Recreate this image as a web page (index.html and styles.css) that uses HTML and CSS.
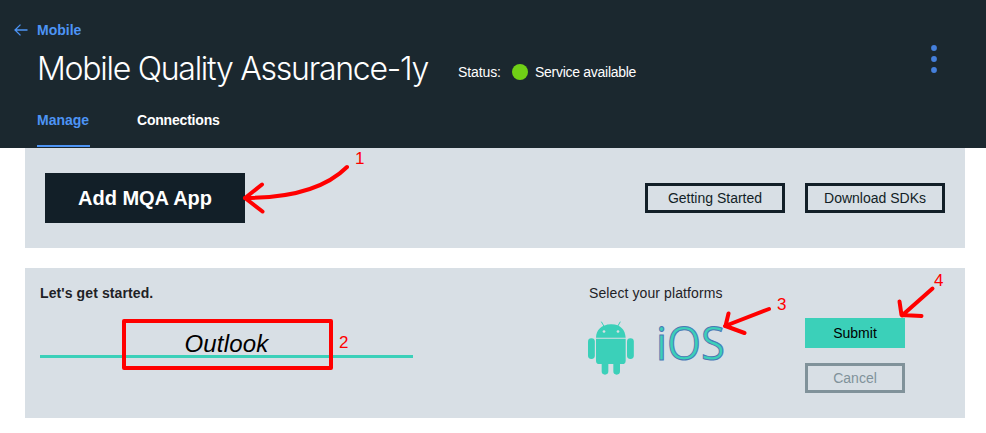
FILE: index.html
```html
<!DOCTYPE html>
<html lang="en">
<head>
<meta charset="utf-8">
<title>Mobile Quality Assurance-1y</title>
<link rel="stylesheet" href="styles.css">
</head>
<body>
<header class="header">
  <a class="back"><svg class="back-icon" width="14" height="12" viewBox="0 0 14 12"><path d="M6.500.6 1 6l5.500 5.400M1 6h12.500"/></svg><span class="back-label">Mobile</span></a>
  <div class="title-row">
    <h1 class="title">Mobile Quality Assurance-1y</h1>
    <span class="status-label">Status:</span>
    <span class="status-dot"></span>
    <span class="status-text">Service available</span>
    <svg class="kebab" width="6" height="30" viewBox="0 0 6 30"><circle cx="3" cy="4" r="2.900"/><circle cx="3" cy="15" r="2.900"/><circle cx="3" cy="26" r="2.900"/></svg>
  </div>
  <nav class="tabs">
    <a class="tab tab-active">Manage</a>
    <a class="tab tab-connections">Connections</a>
  </nav>
</header>
<main class="content">
  <section class="panel toolbar">
    <button class="button add">Add MQA App</button>
    <button class="button outline">Getting Started</button>
    <button class="button outline sdk">Download SDKs</button>
  </section>
  <section class="panel form">
    <div class="name-col">
      <h2 class="form-title"><span>Let's get started.</span></h2>
      <div class="name-field">Outlook</div>
    </div>
    <div class="platforms">
      <p class="platform-title">Select your platforms</p>
      <div class="platform-icons">
        <svg class="android" width="46" height="54" viewBox="54 138 138 162">
          <path d="M78 188C79 165 94 149 122.500 148S166 165 167 188ZM78 191.500H167V257Q167 267 157 267H150V289A10 10 0 0 1 130 289V267H115V289A10 10 0 0 1 95 289V267H88Q78 267 78 257Z"/>
          <rect x="54" y="190" width="20.500" height="62" rx="10.200"/><rect x="171" y="190" width="20.500" height="62" rx="10.200"/>
          <path class="antenna" d="m94 140 8 14m49-14-8 14"/>
          <circle class="eye" cx="102" cy="169.500" r="4"/><circle class="eye" cx="144" cy="169.500" r="4"/>
        </svg>
        <svg class="ios" width="70" height="54" viewBox="0 0 70 54"><text x="0" y="38.500" textLength="69" lengthAdjust="spacingAndGlyphs">iOS</text></svg>
      </div>
    </div>
    <div class="actions">
      <button class="button submit">Submit</button>
      <button class="button cancel">Cancel</button>
    </div>
  </section>
</main>
<svg class="annotations" width="986" height="433" viewBox="0 0 986 433">
  <g class="marks">
    <path d="M347 167Q316 198 245 198"/><path d="M262 184.500 245 198 262.500 211.500"/>
    <path d="M769 309 725 326M728.500 313.500 725.500 326 744.500 333"/>
    <path d="M932.500 288.500 902 315.500M899.500 301.500 901.500 315 921.500 316"/>
    <rect x="124" y="321" width="207" height="47"/>
  </g>
  <g class="numbers"><text x="355" y="164">1</text><text x="339" y="348">2</text><text x="777" y="310">3</text><text x="934" y="286">4</text></g>
</svg>
</body>
</html>
```
FILE: styles.css
```css
* { box-sizing: border-box; }
body {
  margin: 0;
  background: #fff;
  color: #1f2226;
  font: 14px/18px "Liberation Sans", Arial, sans-serif;
}
h1, h2, p { margin: 0; }
.header {
  display: flex;
  flex-direction: column;
  height: 148px;
  padding: 19px 49px 0 14px;
  background: #1b282f;
}
.back { display: flex; align-items: center; height: 21px; color: #4d94f5; font-weight: bold; font-size: 14px; }
.back-icon { margin: 1px 9px 0 0; fill: none; stroke: #4d94f5; stroke-width: 1.300; }
.title-row { display: flex; align-items: center; height: 62px; padding-left: 23px; color: #fff; }
.title { width: 421px; font: 275 32px/48px Inter, "Liberation Sans", sans-serif; letter-spacing: -1.26px; white-space: nowrap; margin-bottom: 5px; }
.status-label { width: 54px; padding-top: 2px; letter-spacing: -.1px; }
.status-dot { width: 16px; height: 16px; margin-right: 7px; margin-top: 2px; border-radius: 50%; background: #70d016; }
.status-text { padding-top: 2px; letter-spacing: -.28px; white-space: nowrap; }
.kebab { margin: 0 0 24px auto; fill: #4580dc; }
.tabs { display: flex; gap: 47px; height: 45px; padding-left: 23px; color: #fff; font-weight: bold; }
.tab { width: 53px; height: 45px; padding-top: 9px; }
.tab-active { color: #4d94f5; border-bottom: 2px solid #4d94f5; }
.tab-connections { width: 84px; letter-spacing: -.2px; }
.content { display: flex; flex-direction: column; gap: 20px; margin: 0 21px 0 25px; }
.panel { display: flex; background: #d8dfe5; }
.toolbar { align-items: center; height: 100px; padding: 0 20px; gap: 20px; }
.button { padding: 0; border: 0; font: 14px/18px "Liberation Sans", Arial, sans-serif; color: #121e26; }
.add { width: 200px; height: 50px; margin-right: auto; background: #121f28; color: #fff; font-size: 20px; font-weight: bold; }
.outline { width: 140px; height: 30px; border: 3px solid #121f28; background: transparent; }
.form { height: 150px; padding: 16px 60px 0 15px; }
.name-col { width: 373px; margin-right: 176px; }
.form-title { font-size: 14px; line-height: 18px; letter-spacing: .1px; }
.name-field {
  height: 56px;
  padding-top: 28px;
  border-bottom: 3px solid #3bd0b9;
  color: #000;
  font-size: 24px;
  line-height: 28px;
  letter-spacing: .2px;
  font-style: italic;
  text-align: center;
}
.platform-title { white-space: nowrap; letter-spacing: .1px; }
.platform-icons { display: flex; padding-top: 19px; gap: 22px; }
.android { margin-left: -1px; fill: #3bd0b9; }
.antenna { fill: none; stroke: #3bd0b9; stroke-width: 3; }
.eye { fill: #d8dfe5; }
.ios { overflow: visible; font: 46px "Open Sans", sans-serif; fill: #3bd0b9; stroke: #4b78b5; stroke-width: 1; }
.actions { display: flex; flex-direction: column; gap: 15px; width: 100px; margin: 34px 0 0 auto; }
.submit { height: 30px; background: #3bd0b9; color: #000; }
.cancel { height: 30px; border: 3px solid #80929a; background: transparent; color: #80929a; }
.annotations { position: absolute; top: 0; left: 0; pointer-events: none; }
.marks { fill: none; stroke: #f00; stroke-width: 4; stroke-linecap: round; stroke-linejoin: round; }
.numbers { fill: #f00; font-size: 17px; }
```
